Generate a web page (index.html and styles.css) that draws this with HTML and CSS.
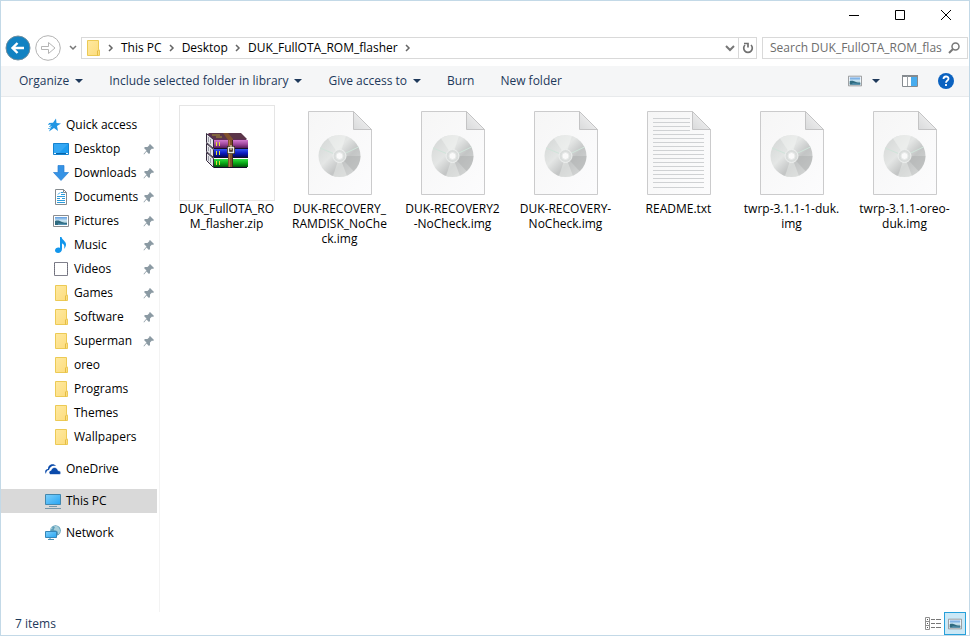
FILE: index.html
```html
<!DOCTYPE html>
<html lang="en">
<head>
<meta charset="utf-8">
<title>DUK_FullOTA_ROM_flasher</title>
<link rel="stylesheet" href="styles.css">
</head>
<body>
<svg class="defs" aria-hidden="true">
  <defs>
    <linearGradient id="gPage" x1="0" y1="0" x2="1" y2="1"><stop offset="0" stop-color="#f6f6f6"/><stop offset="1" stop-color="#fcfcfd"/></linearGradient>
    <linearGradient id="gFold" x1="0" y1="1" x2="1" y2="0"><stop offset="0" stop-color="#d9dadb"/><stop offset="1" stop-color="#f8f8f8"/></linearGradient>
    <linearGradient id="gDisc" x1="0" y1="0" x2="1" y2="1"><stop offset="0" stop-color="#d2d5d4"/><stop offset=".4" stop-color="#e4e6e5"/><stop offset=".62" stop-color="#c3c5c5"/><stop offset="1" stop-color="#d9dbda"/></linearGradient>
    <linearGradient id="gFolder" x1="0" y1="0" x2="1" y2="1"><stop offset="0" stop-color="#ffe9a0"/><stop offset="1" stop-color="#fcdc7c"/></linearGradient>
    <linearGradient id="gScreen" x1="0" y1="0" x2="1" y2="1"><stop offset="0" stop-color="#7ed0fb"/><stop offset="1" stop-color="#27a5f3"/></linearGradient>
    <linearGradient id="gPhoto" x1="0" y1="0" x2="0" y2="1"><stop offset="0" stop-color="#5f9ce0"/><stop offset=".5" stop-color="#d5edf5"/><stop offset="1" stop-color="#27617c"/></linearGradient>
    <linearGradient id="gPurple" x1="0" y1="0" x2="0" y2="1"><stop offset="0" stop-color="#d27bd0"/><stop offset=".5" stop-color="#a34aa0"/><stop offset="1" stop-color="#57195a"/></linearGradient>
    <linearGradient id="gBlue" x1="0" y1="0" x2="0" y2="1"><stop offset="0" stop-color="#3456f4"/><stop offset=".5" stop-color="#0c1cc4"/><stop offset="1" stop-color="#03075c"/></linearGradient>
    <linearGradient id="gGreen" x1="0" y1="0" x2="0" y2="1"><stop offset="0" stop-color="#31df40"/><stop offset=".5" stop-color="#08a916"/><stop offset="1" stop-color="#02540a"/></linearGradient>
  </defs>
  <symbol id="folder" viewBox="0 0 16 16"><path d="M2.500.5h11v9l1 1v5h-12z" fill="url(#gFolder)" stroke="#ecca55"/><path d="M12.500 15.500v-4.500l1-1h1" fill="none" stroke="#e5bd45"/></symbol>
  <symbol id="pin" viewBox="0 0 12 12"><path d="M7 1l4 4-1 1-1-.5-2 2V10l-1 1-2.500-2.500L1 11.500.5 11l3-3.500L1 5l1-1h2.500l2-2L6 2z" fill="#8b9aa3"/></symbol>
  <symbol id="star" viewBox="0 0 16 16"><path d="M11 1.500l.5 4.500 4.500.5-4 2.500 1 5-4-3-5 3.500 2-5L3.500 6l4.500-.3z" fill="#2196e3"/><path d="M3 7.500h3M4 9.500h3M3 11.500h3" stroke="#70bdec"/></symbol>
  <symbol id="desktop" viewBox="0 0 16 16"><path d="M.5 2.500h15v11H.5z" fill="#1e9df0" stroke="#1683cf"/><path d="M1 3h14L5 13H1z" fill="#35a8f4"/><path d="M1 12.500h14" stroke="#0765a9"/><path d="M1 12.500h2m10 0h2" stroke="#e9f7ff"/></symbol>
  <symbol id="download" viewBox="0 0 16 16"><path d="M5 .5h6v7h4.500L8 15.500.5 7.500H5z" fill="#3593e5" stroke="#2a7ed2" stroke-width=".7"/></symbol>
  <symbol id="document" viewBox="0 0 16 16"><path d="M2.500.5h8l3 3v12h-11z" fill="#fff" stroke="#858b8f"/><path d="M10.500.5v3h3" fill="none" stroke="#858b8f"/><path d="M5 5.500l2-2M8 3.500h2M8 5.500h4M4 7.500h8M4 9.500h3M9 9.500h3M4 11.500h8M4 13.500h8" stroke="#2d9cdb"/></symbol>
  <symbol id="picture" viewBox="0 0 16 16"><path d="M.5 2.500h15v11H.5z" fill="#fff" stroke="#8a8d90"/><path d="M2 4h12v8H2z" fill="url(#gPhoto)"/><path d="M2 8c3-1 5 0 7 1s3 1 5 1v2H2z" fill="#2f6b80"/><path d="M5 10.500l9 .5v1H5z" fill="#5595b5"/></symbol>
  <symbol id="music" viewBox="0 0 16 16"><path d="M7 0h1.500c.5 3 4.500 4 4.500 7.500 0 2-1 3-2 4.500 1-4-.5-5-2-5.500V12c0 5-7 5-7 1.500C2 11 5 10 7 11z" fill="#1296ec"/></symbol>
  <symbol id="video" viewBox="0 0 16 16"><path d="M1.500 1.500h13v13h-13z" fill="#fff" stroke="#80808c"/><path d="M1.500 2v12m13-12v12" stroke="#6c6c78" stroke-dasharray="1 1"/></symbol>
  <symbol id="cloud" viewBox="0 0 16 16"><path d="M1 13C-1 10 1 8 3 8c0-5 6-6 8-3-4-1-6 1-7 4-2 0-3 2-3 4z" fill="#0b4bab"/><path d="M5.500 13.500c-2.500-1-1.500-4 .5-4 1-4 6-4 7 0 3 0 4 4 1 4z" fill="#0b4bab" stroke="#fff" stroke-width=".6"/></symbol>
  <symbol id="computer" viewBox="0 0 16 16"><path d="M.5 1.500h15v10H.5z" fill="url(#gScreen)" stroke="#4387ad"/><path d="M4 13.500h8M0 15.500h16" stroke="#7698aa"/></symbol>
  <symbol id="network" viewBox="0 0 16 16"><circle cx="10.500" cy="5.500" r="5.300" fill="#5b9db9"/><path d="M8 1c4 1 0 3 1 4s4 0 4 3 2 0 2-2-1-4-3-5zM5.500 5L8 3 6 2z" fill="#a8cfda"/><path d="M.5 6.500h11v6H.5z" fill="url(#gScreen)" stroke="#3586b8"/><path d="M3 14.500h6M5 13v1" stroke="#4c91b5"/></symbol>
  <symbol id="disc" viewBox="0 0 64 84">
    <path d="M.5.500h45l18 18v65H.5z" fill="url(#gPage)" stroke="#cbcbcc"/><path d="M45.500.5v18h18z" fill="url(#gFold)" stroke="#c4c4c5"/>
    <circle cx="31.500" cy="45" r="21" fill="url(#gDisc)"/><path d="M31.500 45L20 27.500A21 21 0 0 1 38 25z" fill="#f4f5f4" opacity=".5"/><path d="M31.500 45L25 65a21 21 0 0 0 14 0z" fill="#f3f4f3" opacity=".4"/><path d="M31.500 45h21a21 21 0 0 1-7 15z" fill="#aeb0b0" opacity=".5"/>
    <path d="M31.500 45L12 37M31.500 45l19-9" stroke="#d0e4da"/><circle cx="31.500" cy="45" r="6.500" fill="#dadddc" stroke="#eef0ef"/><circle cx="31.500" cy="45" r="3.500" fill="#fafafa" stroke="#e8eae9"/>
  </symbol>
</svg>
<div class="window">
  <header class="titlebar">
    <button class="caption" aria-label="Minimize"><svg width="12" height="12"><path d="M1 6.500h10" stroke="#000"/></svg></button>
    <button class="caption" aria-label="Maximize"><svg width="12" height="12"><path d="M1.500 1.500h9v9h-9z" fill="none" stroke="#000"/></svg></button>
    <button class="caption" aria-label="Close"><svg width="12" height="12"><path d="M1 1l10 10M11 1L1 11" stroke="#000"/></svg></button>
  </header>
  <nav class="navrow" aria-label="Location">
    <button class="round" aria-label="Back"><svg width="26" height="26"><circle cx="13" cy="13" r="12" fill="#1282c2" stroke="#718f9f"/><path d="M19 13H8M12.500 8L7.500 13l5 5" fill="none" stroke="#fff" stroke-width="2.400"/></svg></button>
    <button class="round" aria-label="Forward"><svg width="26" height="26"><circle cx="13" cy="13" r="12.300" fill="#fff" stroke="#b3b3b3"/><path d="M6.500 11.500h7v-4L20 13l-6.500 5.500v-4h-7z" fill="#fff" stroke="#b5b5b5"/></svg></button>
    <button class="recent" aria-label="Recent locations"><svg width="8" height="6"><path d="M1 1l3 3 3-3" fill="none" stroke="#777" stroke-width="1.500"/></svg></button>
    <div class="address">
      <svg class="ico"><use href="#folder"/></svg>
      <svg class="sep" width="6" height="8"><path d="M1 1l3 3-3 3" fill="none" stroke="#666" stroke-width="1.500"/></svg>
      <button>This PC</button>
      <svg class="sep" width="6" height="8"><path d="M1 1l3 3-3 3" fill="none" stroke="#666" stroke-width="1.500"/></svg>
      <button>Desktop</button>
      <svg class="sep" width="6" height="8"><path d="M1 1l3 3-3 3" fill="none" stroke="#666" stroke-width="1.500"/></svg>
      <button>DUK_FullOTA_ROM_flasher</button>
      <svg class="sep" width="6" height="8"><path d="M1 1l3 3-3 3" fill="none" stroke="#666" stroke-width="1.500"/></svg>
      <button class="drop" aria-label="Previous locations"><svg width="10" height="8"><path d="M1 2l4 4 4-4" fill="none" stroke="#777" stroke-width="2"/></svg></button>
      <button class="refresh" aria-label="Refresh"><svg width="12" height="12"><path d="M3 3a4.300 4.300 0 1 0 6 0" fill="none" stroke="#707070" stroke-width="1.700"/><path d="M2 1.500h4v4" fill="none" stroke="#707070" stroke-width="1.700"/></svg></button>
    </div>
    <label class="search"><input type="text" aria-label="Search" placeholder="Search DUK_FullOTA_ROM_flas"><svg width="12" height="12"><circle cx="7.500" cy="4.500" r="3.500" fill="none" stroke="#777" stroke-width="1.500"/><path d="M5 7L1 11" stroke="#777" stroke-width="2"/></svg></label>
  </nav>
  <div class="commands">
    <button>Organize<i class="tri"></i></button>
    <button>Include selected folder in library<i class="tri"></i></button>
    <button>Give access to<i class="tri"></i></button>
    <button>Burn</button>
    <button>New folder</button>
    <div class="tools">
      <button aria-label="Change view"><svg class="view"><use href="#picture"/></svg></button>
      <button aria-label="More views"><i class="tri"></i></button>
      <button aria-label="Preview pane"><svg width="16" height="12"><path d="M.5.5h15v11H.5z" fill="#fff" stroke="#858b90"/><path d="M0 1h16" stroke="#858b90" stroke-width="2"/><path d="M5.500 1v10" stroke="#9ca2a6"/><path d="M9 2h6v9H9z" fill="#48acee"/></svg></button>
      <button aria-label="Help"><svg width="16" height="16"><circle cx="8" cy="8" r="8" fill="#0b62c0"/><path d="M5.500 6c0-3.300 5-3.300 5-.3C10.500 7.500 8 7.500 8 9.700M8 11v2" fill="none" stroke="#fff" stroke-width="1.800"/></svg></button>
    </div>
  </div>
  <div class="body">
    <nav class="sidebar" aria-label="Folders">
      <a class="root" href="#"><svg class="ico"><use href="#star"/></svg>Quick access</a>
      <a href="#"><svg class="ico"><use href="#desktop"/></svg>Desktop<svg class="pin"><use href="#pin"/></svg></a>
      <a href="#"><svg class="ico"><use href="#download"/></svg>Downloads<svg class="pin"><use href="#pin"/></svg></a>
      <a href="#"><svg class="ico"><use href="#document"/></svg>Documents<svg class="pin"><use href="#pin"/></svg></a>
      <a href="#"><svg class="ico"><use href="#picture"/></svg>Pictures<svg class="pin"><use href="#pin"/></svg></a>
      <a href="#"><svg class="ico"><use href="#music"/></svg>Music<svg class="pin"><use href="#pin"/></svg></a>
      <a href="#"><svg class="ico"><use href="#video"/></svg>Videos<svg class="pin"><use href="#pin"/></svg></a>
      <a href="#"><svg class="ico"><use href="#folder"/></svg>Games<svg class="pin"><use href="#pin"/></svg></a>
      <a href="#"><svg class="ico"><use href="#folder"/></svg>Software<svg class="pin"><use href="#pin"/></svg></a>
      <a href="#"><svg class="ico"><use href="#folder"/></svg>Superman<svg class="pin"><use href="#pin"/></svg></a>
      <a href="#"><svg class="ico"><use href="#folder"/></svg>oreo</a>
      <a href="#"><svg class="ico"><use href="#folder"/></svg>Programs</a>
      <a href="#"><svg class="ico"><use href="#folder"/></svg>Themes</a>
      <a href="#"><svg class="ico"><use href="#folder"/></svg>Wallpapers</a>
      <a class="root group" href="#"><svg class="ico"><use href="#cloud"/></svg>OneDrive</a>
      <a class="root group selected" href="#"><svg class="ico"><use href="#computer"/></svg>This PC</a>
      <a class="root group" href="#"><svg class="ico"><use href="#network"/></svg>Network</a>
    </nav>
    <main class="files">
      <a class="file" href="#"><span class="thumb framed">
        <svg width="42" height="35" viewBox="0 0 42 35">
          <path d="M0 1h34l7 6v4H8z" fill="#602c58"/><path d="M2 0h33l6 6H8z" fill="#5b3549"/>
          <path d="M.5.500l7 6v9l-7-6zM.5 10.500l7 6v8l-7-6zM.5 19.500l7 6v9l-7-7z" fill="#e4e4e8" stroke="#33283c"/>
          <path d="M2.500 4v5m2-3v5M2.500 14v4m2-2v5M2.500 23v5m2-3v5" stroke="#9b9ba7"/>
          <path d="M8 7h34v8H8z" fill="url(#gPurple)"/><path d="M8 16h34v8H8z" fill="url(#gBlue)"/><path d="M8 26h34v8H8z" fill="url(#gGreen)"/>
          <path d="M8 15.500h34M8 24.500h34M8 34.500h33" stroke="#130e29"/>
          <path d="M10.500 9v4m3-4v4M10.500 18v4m3-4v4M10.500 28v4m3-4v4" stroke="#e6dd32"/>
          <path d="M6 2h8M10 4h6" stroke="#a79435"/>
          <path d="M17 0h5l5 6v28h-5V7z" fill="#80502d"/><path d="M23.500 7v27" stroke="#b57845"/><path d="M26.500 7v27" stroke="#412a1b"/>
          <path d="M22.500 14.500h5v5h-5z" fill="#5b432f" stroke="#33261b" stroke-width="3"/><path d="M22.500 14.500h5v5h-5z" fill="none" stroke="#e9e9e0" stroke-width="1.400"/><path d="M25 12v5" stroke="#f3edcc"/>
        </svg></span><span class="name">DUK_FullOTA_RO<br>M_flasher.zip</span></a>
      <a class="file" href="#"><span class="thumb"><svg class="page"><use href="#disc"/></svg></span><span class="name">DUK-RECOVERY_<br>RAMDISK_NoChe<br>ck.img</span></a>
      <a class="file" href="#"><span class="thumb"><svg class="page"><use href="#disc"/></svg></span><span class="name">DUK-RECOVERY2<br>-NoCheck.img</span></a>
      <a class="file" href="#"><span class="thumb"><svg class="page"><use href="#disc"/></svg></span><span class="name">DUK-RECOVERY-<br>NoCheck.img</span></a>
      <a class="file" href="#"><span class="thumb"><svg class="page" viewBox="0 0 64 84"><path d="M.5.500h45l18 18v65H.5z" fill="url(#gPage)" stroke="#cbcbcc"/><path d="M6 7.500h37M6 11.500h37M6 15.500h37M6 19.500h37M6 23.500h51M6 27.500h51M6 31.500h51M6 35.500h51M6 39.500h51M6 43.500h51M6 47.500h51M6 51.500h51M6 55.500h51M6 59.500h51M6 63.500h51M6 67.500h51M6 71.500h51M6 76.500h51" stroke="#cfd1d3"/><path d="M45.500.5v18h18z" fill="url(#gFold)" stroke="#c4c4c5"/></svg></span><span class="name">README.txt</span></a>
      <a class="file" href="#"><span class="thumb"><svg class="page"><use href="#disc"/></svg></span><span class="name">twrp-3.1.1-1-duk.<br>img</span></a>
      <a class="file" href="#"><span class="thumb"><svg class="page"><use href="#disc"/></svg></span><span class="name">twrp-3.1.1-oreo-<br>duk.img</span></a>
    </main>
  </div>
  <footer class="status">
    <span>7 items</span>
    <div class="modes">
      <button aria-label="Details"><svg width="16" height="13"><path d="M.5.500h4v12h-4zM.5 4.500h4M.5 8.500h4" fill="none" stroke="#909090"/><path d="M2 2.500h1M2 6.500h1M2 10.500h1" stroke="#555"/><path d="M6 2.500h4m1 0h5M6 6.500h4m1 0h5M6 10.500h4m1 0h5" stroke="#777"/></svg></button>
      <button class="active" aria-label="Large icons"><svg class="view"><use href="#picture"/></svg></button>
    </div>
  </footer>
</div>
</body>
</html>
```
FILE: styles.css
```css
* { box-sizing: border-box; }
body {
  margin: 0;
  font: 12px/16px "Open Sans", "Noto Sans", sans-serif;
  color: #000;
  background: #fff;
}
button {
  display: flex;
  align-items: center;
  justify-content: center;
  padding: 0;
  border: 0;
  background: none;
  font: inherit;
  color: inherit;
  white-space: nowrap;
}
svg { display: block; flex: none; }
a { color: inherit; text-decoration: none; }
.defs { position: absolute; width: 0; height: 0; }
.ico { width: 16px; height: 16px; }
.window {
  display: flex;
  flex-direction: column;
  min-height: 100vh;
  border: 1px solid #c3d9e7;
}
.titlebar { display: flex; justify-content: flex-end; height: 36px; }
.caption { width: 46px; height: 28px; }
.navrow {
  display: flex;
  align-items: center;
  height: 22px;
  margin-bottom: 7px;
  padding: 0 1px 0 4px;
}
.round { width: 26px; margin-right: 4px; }
.recent { width: 16px; }
.address {
  display: flex;
  align-items: center;
  flex: 1;
  height: 22px;
  border: 1px solid #d9d9d9;
  padding-left: 3px;
}
.sep { margin: 0 7px; }
.drop { margin-left: auto; width: 16px; }
.refresh { width: 18px; height: 20px; border-left: 1px solid #d9d9d9; }
.search {
  display: flex;
  align-items: center;
  width: 206px;
  height: 22px;
  margin-left: 5px;
  padding: 0 7px;
  border: 1px solid #d9d9d9;
}
.search input {
  flex: 1;
  min-width: 0;
  padding: 0;
  border: 0;
  outline: 0;
  background: none;
  font: inherit;
}
.search input::placeholder { color: #6d6d6d; opacity: 1; }
.commands {
  display: flex;
  align-items: center;
  gap: 26px;
  height: 31px;
  padding: 0 15px 0 18px;
  background: #f5f6f7;
  border-bottom: 1px solid #e8eaec;
  color: #1e395b;
}
.tri {
  border: 4px solid transparent;
  border-top-color: #1e395b;
  border-bottom: 0;
  margin-left: 6px;
}
.tools { display: flex; align-items: center; margin-left: auto; }
.tools .tri { margin: 0 22px 0 10px; }
.tools button:last-child { margin-left: 20px; }
.view { width: 14px; height: 14px; }
.body { display: flex; flex: 1; }
.sidebar {
  width: 159px;
  flex: none;
  padding-top: 16px;
  border-right: 1px solid #f3f3f3;
}
.sidebar a {
  display: flex;
  align-items: center;
  gap: 5px;
  height: 24px;
  margin-right: 2px;
  padding: 0 2px 0 52px;
}
.sidebar .root { padding-left: 44px; }
.sidebar .group { margin-top: 8px; }
.sidebar .selected { background: #d9d9d9; }
.pin { width: 12px; height: 12px; margin-left: auto; }
.files {
  display: grid;
  grid-template-columns: repeat(auto-fill, 113px);
  align-content: start;
  flex: 1;
  padding: 8px 0 0 10px;
}
.file { text-align: center; }
.thumb {
  display: flex;
  align-items: center;
  justify-content: center;
  width: 96px;
  height: 96px;
  margin: 0 auto;
}
.framed { border: 1px solid #e5e5e5; padding-bottom: 5px; }
.page { width: 64px; height: 84px; }
.name { display: block; line-height: 15px; white-space: nowrap; }
.status {
  display: flex;
  align-items: center;
  justify-content: space-between;
  height: 23px;
  padding: 0 3px 0 14px;
  color: #1e395b;
}
.modes { display: flex; gap: 3px; }
.modes button { width: 16px; height: 23px; }
.modes .active { width: 22px; border: 1px solid #26a0da; background: #cbe8f6; }
```
